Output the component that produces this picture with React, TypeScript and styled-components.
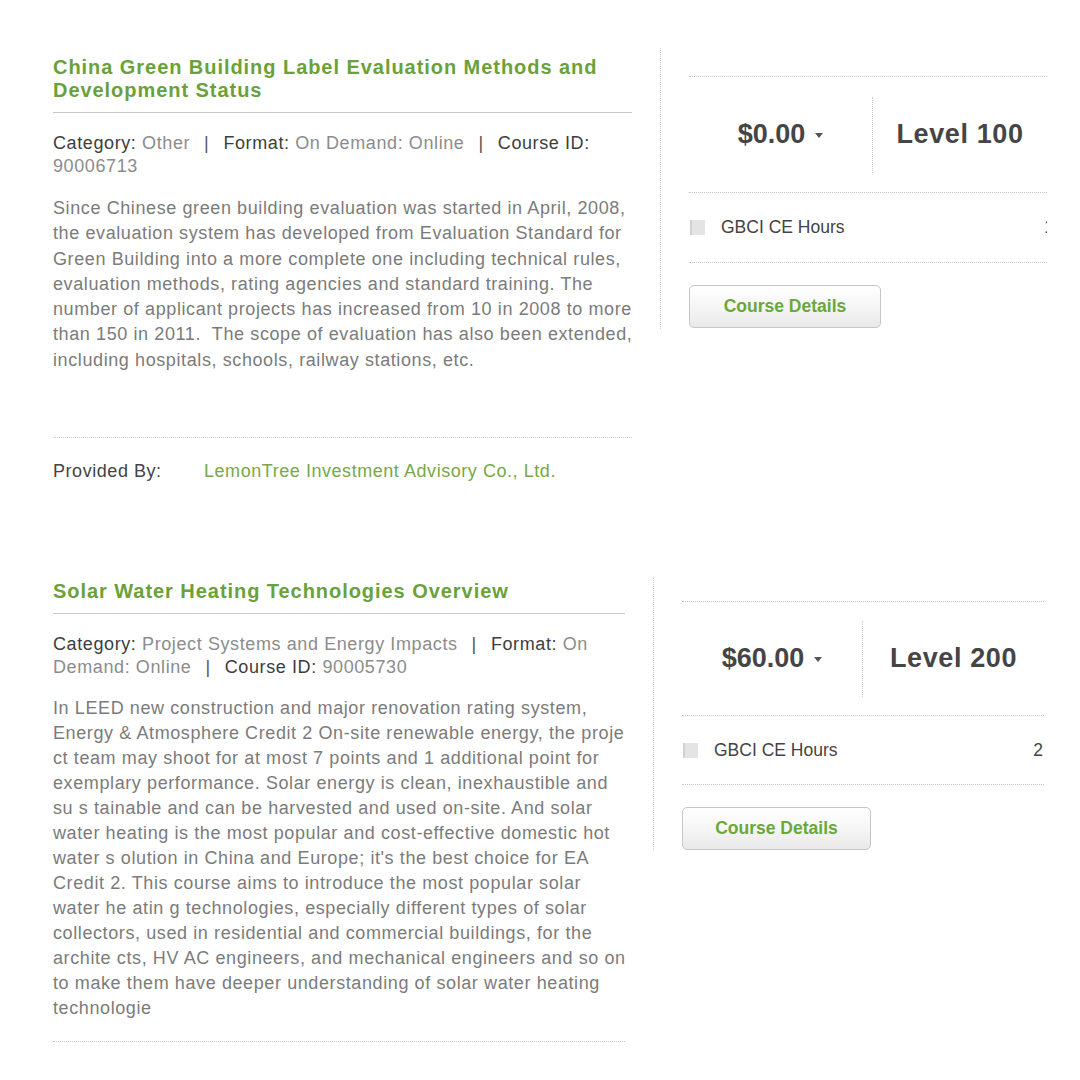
import React from "react";
import styled, { createGlobalStyle } from "styled-components";

const Global = createGlobalStyle`
  html, body { margin: 0; padding: 0; background: #fff; }
  body { font-family: "Liberation Sans", Arial, sans-serif; }
`;

const Page = styled.div`
  width: 1080px;
  height: 1080px;
  overflow: hidden;
  padding: 48px 0 0 53px;
  box-sizing: border-box;
  display: flex;
  flex-direction: column;
`;

const Card = styled.section<{ $left: number; $top: number }>`
  display: grid;
  grid-template-columns: ${(p) => p.$left}px auto;
  column-gap: 28px;
  align-items: start;
  margin-top: ${(p) => p.$top}px;
`;

const Main = styled.div`
  display: flex;
  flex-direction: column;
`;

const Title = styled.h2`
  margin: 0;
  padding: 8px 0 10px;
  font-size: 20px;
  line-height: 23px;
  letter-spacing: 0.95px;
  font-weight: 700;
  color: #6aa13b;
  border-bottom: 1px solid #c9c9c9;
`;

const Meta = styled.div`
  margin-top: 19px;
  font-size: 18px;
  line-height: 23px;
  letter-spacing: 0.6px;
  color: #8c8c8c;
`;

const Label = styled.span`
  color: #3d3d3d;
`;

const Sep = styled.span`
  color: #555;
  margin: 0 14px;
`;

const Desc = styled.div<{ $lh: number; $gap: number }>`
  margin-top: ${(p) => p.$gap}px;
  font-size: 18px;
  line-height: ${(p) => p.$lh}px;
  letter-spacing: 0.6px;
  color: #7b7b7b;
  white-space: nowrap;
`;

const Line = styled.span`
  display: block;
`;

const Provider = styled.div<{ $gap: number }>`
  margin-top: ${(p) => p.$gap}px;
  border-top: 1px dotted #c8c8c8;
  padding-top: 22px;
  display: flex;
  font-size: 18px;
  line-height: 23px;
  letter-spacing: 0.55px;
`;

const ProviderLabel = styled.span`
  color: #444;
  width: 151px;
`;

const ProviderName = styled.span`
  color: #78a847;
`;

const Side = styled.aside<{ $width: number; $pad: number; $offset: number }>`
  margin-top: ${(p) => p.$offset}px;
  border-left: 1px dotted #cfcfcf;
  padding: ${(p) => p.$pad}px 0 1px 28px;
  width: ${(p) => p.$width}px;
  overflow: hidden;
`;

const PriceRow = styled.div<{ $h: number }>`
  border-top: 1px dotted #c8c8c8;
  border-bottom: 1px dotted #c8c8c8;
  height: ${(p) => p.$h}px;
  display: flex;
  align-items: center;
`;

const PriceCell = styled.div<{ $w: number }>`
  width: ${(p) => p.$w}px;
  height: 76px;
  border-right: 1px dotted #cfcfcf;
  display: flex;
  align-items: center;
  justify-content: center;
  gap: 10px;
  font-size: 27px;
  font-weight: 700;
  color: #454545;
`;

const Caret = styled.span`
  width: 0;
  height: 0;
  border-left: 4.5px solid transparent;
  border-right: 4.5px solid transparent;
  border-top: 5px solid #555;
  margin-top: 2px;
`;

const LevelCell = styled.div`
  flex: 1;
  text-align: center;
  font-size: 27px;
  font-weight: 700;
  letter-spacing: 0.6px;
  color: #454545;
`;

const HoursRow = styled.div<{ $h: number }>`
  height: ${(p) => p.$h}px;
  border-bottom: 1px dotted #c8c8c8;
  display: flex;
  align-items: center;
  font-size: 17.5px;
  color: #444;
`;

const Check = styled.span`
  width: 13px;
  height: 15px;
  background: #e4e4e4;
  border-left: 2px solid #d2d2d2;
  margin: 0 16px 0 1px;
`;

const HoursValue = styled.span<{ $shift: number }>`
  margin-left: auto;
  margin-right: ${(p) => p.$shift}px;
  color: #444;
`;

const Button = styled.button<{ $w: number }>`
  margin-top: 22px;
  width: ${(p) => p.$w}px;
  height: 43px;
  border: 1px solid #c6c6c6;
  border-radius: 5px;
  background: linear-gradient(#ffffff, #f6f6f6 50%, #e9e9e9);
  font-family: "Liberation Sans", Arial, sans-serif;
  font-size: 17.5px;
  font-weight: 700;
  color: #6aa83a;
  display: block;
  padding: 0;
`;

type CourseProps = {
  left: number;
  top: number;
  title: string[];
  category: string;
  format: string;
  id: string;
  lines: string[];
  lh: number;
  descGap: number;
  provider?: string;
  providerGap: number;
  sideWidth: number;
  sidePad: number;
  sideOffset: number;
  priceH: number;
  priceW: number;
  price: string;
  level: string;
  hoursH: number;
  hours: string;
  shift: number;
  btnW: number;
};

function Course(p: CourseProps) {
  return (
    <Card $left={p.left} $top={p.top}>
      <Main>
        <Title>
          {p.title.map((t, i) => (
            <Line key={i}>{t}</Line>
          ))}
        </Title>
        <Meta>
          <Label>Category:</Label> {p.category}
          <Sep>|</Sep>
          <Label>Format:</Label> {p.format}
          <Sep>|</Sep>
          <Label>Course ID:</Label> {p.id}
        </Meta>
        <Desc $lh={p.lh} $gap={p.descGap}>
          {p.lines.map((l, i) => (
            <Line key={i}>{l}</Line>
          ))}
        </Desc>
        <Provider $gap={p.providerGap}>
          {p.provider && (
            <>
              <ProviderLabel>Provided By:</ProviderLabel>
              <ProviderName>{p.provider}</ProviderName>
            </>
          )}
        </Provider>
      </Main>
      <Side $width={p.sideWidth} $pad={p.sidePad} $offset={p.sideOffset}>
        <PriceRow $h={p.priceH}>
          <PriceCell $w={p.priceW}>
            {p.price}
            <Caret />
          </PriceCell>
          <LevelCell>{p.level}</LevelCell>
        </PriceRow>
        <HoursRow $h={p.hoursH}>
          <Check />
          GBCI CE Hours
          <HoursValue $shift={p.shift}>{p.hours}</HoursValue>
        </HoursRow>
        <Button $w={p.btnW}>Course Details</Button>
      </Side>
    </Card>
  );
}

export default function App() {
  return (
    <>
      <Global />
      <Page>
        <Course
          left={579}
          top={0}
          title={["China Green Building Label Evaluation Methods and", "Development Status"]}
          category="Other"
          format="On Demand: Online"
          id="90006713"
          lh={25.3}
          descGap={18}
          lines={[
            "Since Chinese green building evaluation was started in April, 2008,",
            "the evaluation system has developed from Evaluation Standard for",
            "Green Building into a more complete one including technical rules,",
            "evaluation methods, rating agencies and standard training. The",
            "number of applicant projects has increased from 10 in 2008 to more",
            "than 150 in 2011.\u00a0 The scope of evaluation has also been extended,",
            "including hospitals, schools, railway stations, etc.",
          ]}
          provider="LemonTree Investment Advisory Co., Ltd."
          providerGap={64}
          sideWidth={358}
          sidePad={28}
          sideOffset={0}
          priceH={115}
          priceW={183}
          price="$0.00"
          level="Level 100"
          hoursH={69}
          hours="1"
          shift={-7}
          btnW={192}
        />
        <Course
          left={572}
          top={89}
          title={["Solar Water Heating Technologies Overview"]}
          category="Project Systems and Energy Impacts"
          format="On Demand: Online"
          id="90005730"
          lh={25}
          descGap={17}
          lines={[
            "In LEED new construction and major renovation rating system,",
            "Energy & Atmosphere Credit 2 On-site renewable energy, the proje",
            "ct team may shoot for at most 7 points and 1 additional point for",
            "exemplary performance. Solar energy is clean, inexhaustible and",
            "su s tainable and can be harvested and used on-site. And solar",
            "water heating is the most popular and cost-effective domestic hot",
            "water s olution in China and Europe; it's the best choice for EA",
            "Credit 2. This course aims to introduce the most popular solar",
            "water he atin g technologies, especially different types of solar",
            "collectors, used in residential and commercial buildings, for the",
            "archite cts, HV AC engineers, and mechanical engineers and so on",
            "to make them have deeper understanding of solar water heating",
            "technologie",
          ]}
          providerGap={20}
          sideWidth={362}
          sidePad={24}
          sideOffset={5}
          priceH={113}
          priceW={180}
          price="$60.00"
          level="Level 200"
          hoursH={68}
          hours="2"
          shift={1}
          btnW={189}
        />
      </Page>
    </>
  );
}
